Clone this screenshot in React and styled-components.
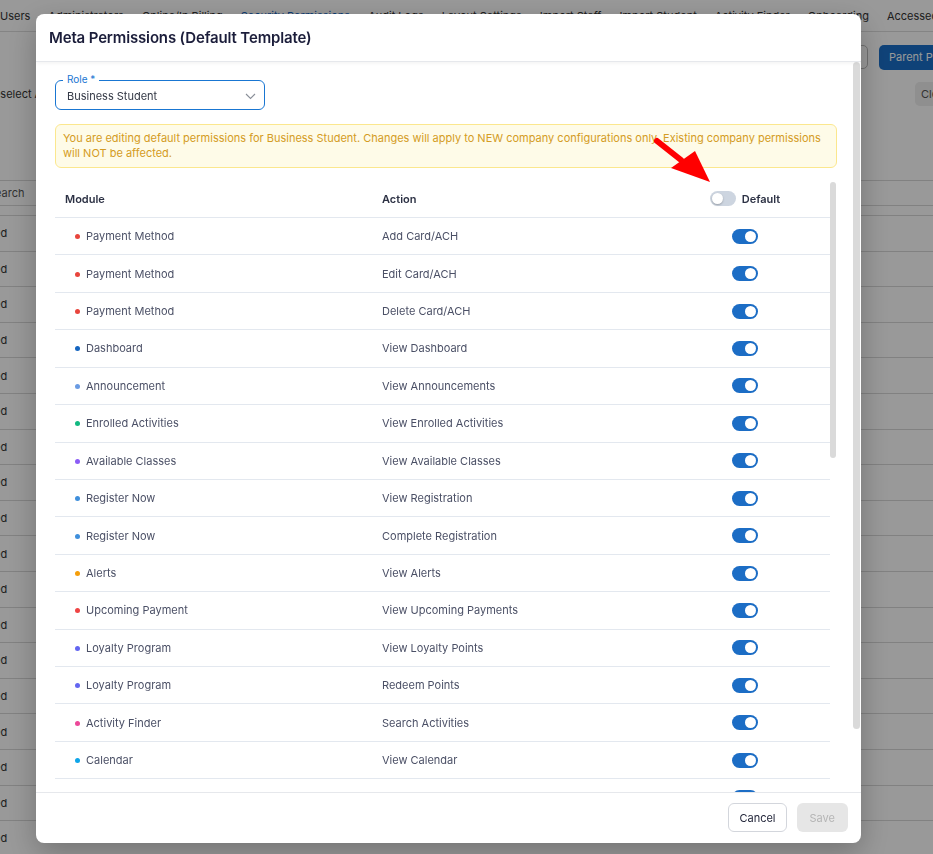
import React from 'react';
import styled, { createGlobalStyle } from 'styled-components';

const GlobalStyle = createGlobalStyle`
	html, body {
		margin: 0;
		padding: 0;
		background: #ffffff;
		font-family: Inter, "Liberation Sans", sans-serif;
		overflow: hidden;
	}
	* {
		box-sizing: border-box;
	}
`;

const tabs = [
	'Users',
	'Administrators',
	'Online/In Billing',
	'Security Permissions',
	'Audit Logs',
	'Layout Settings',
	'Import Staff',
	'Import Student',
	'Activity Finder',
	'Onboarding',
	'Accessed By',
];

const rows = [
	['Payment Method', 'Add Card/ACH', '#e8453c'],
	['Payment Method', 'Edit Card/ACH', '#e8453c'],
	['Payment Method', 'Delete Card/ACH', '#e8453c'],
	['Dashboard', 'View Dashboard', '#1565c0'],
	['Announcement', 'View Announcements', '#6a9be3'],
	['Enrolled Activities', 'View Enrolled Activities', '#12b981'],
	['Available Classes', 'View Available Classes', '#8b5cf6'],
	['Register Now', 'View Registration', '#3f8fdc'],
	['Register Now', 'Complete Registration', '#3f8fdc'],
	['Alerts', 'View Alerts', '#f59e0b'],
	['Upcoming Payment', 'View Upcoming Payments', '#ef4444'],
	['Loyalty Program', 'View Loyalty Points', '#6366f1'],
	['Loyalty Program', 'Redeem Points', '#6366f1'],
	['Activity Finder', 'Search Activities', '#ec4899'],
	['Calendar', 'View Calendar', '#0ea5e9'],
	['Calendar', 'Export Calendar', '#0ea5e9'],
	['Profile', 'View Profile', '#14b8a6'],
	['Profile', 'Edit Profile', '#14b8a6'],
];

// Background page behind the modal
const Page = styled.div`
	width: 100vw;
	height: 100vh;
	background: #ffffff;
	color: #333;
	font-size: 11px;
`;

const TabBar = styled.div`
	display: flex;
	gap: 18px;
	height: 32px;
	align-items: center;
	white-space: nowrap;
	border-bottom: 1px solid #ddd;
	overflow: hidden;
`;

const Tab = styled.span`
	color: ${props => (props.active ? '#1565c0' : '#333')};
	flex: none;
`;

const Toolbar = styled.div`
	display: flex;
	justify-content: flex-end;
	align-items: center;
	gap: 11px;
	height: 48px;
	padding-top: 2px;
	margin-right: -40px;
`;

const OutlineBtn = styled.div`
	width: 60px;
	height: 24px;
	border: 1px solid #bbb;
	border-radius: 5px;
`;

const PrimaryBtn = styled.div`
	width: 94px;
	height: 25px;
	border-radius: 5px;
	background: #1a6fc9;
	color: #fff;
	display: flex;
	align-items: center;
	padding-left: 10px;
	font-size: 11px;
`;

const FilterRow = styled.div`
	display: flex;
	justify-content: space-between;
	align-items: center;
	height: 28px;
	margin-left: -14px;
	margin-right: -30px;
`;

const GhostBtn = styled.div`
	width: 48px;
	height: 24px;
	border-radius: 5px;
	background: #eee;
	color: #555;
	display: flex;
	align-items: center;
	padding-left: 6px;
`;

const BgTable = styled.div`
	margin-top: 72px;
	border-top: 1px solid #d8d8d8;
`;

const BgHead = styled.div`
	height: 25px;
	display: flex;
	align-items: center;
	border-bottom: 1px solid #d8d8d8;
	margin-left: -12px;
	color: #555;
	margin-bottom: 9px;
`;

const BgRow = styled.div`
	height: 35.6px;
	display: flex;
	align-items: center;
	border-top: 1px solid #d8d8d8;
	margin-left: -34px;
`;

// Modal
const Overlay = styled.div`
	position: fixed;
	inset: 0;
	background: rgba(0, 0, 0, 0.4);
`;

const Dialog = styled.div`
	position: fixed;
	left: 36px;
	top: 14px;
	width: 825px;
	height: 829px;
	background: #fff;
	border-radius: 8px;
	box-shadow: 0 10px 30px rgba(0, 0, 0, 0.25);
	display: flex;
	flex-direction: column;
	overflow: hidden;
`;

const Header = styled.div`
	height: 48px;
	flex: none;
	display: flex;
	align-items: center;
	padding-left: 13px;
	border-bottom: 1px solid #e6e8ec;
	box-shadow: 0 1px 4px rgba(0, 0, 0, 0.06);
	position: relative;
	z-index: 1;
`;

const Title = styled.h2`
	margin: 0;
	font-size: 15px;
	font-weight: 600;
	color: #1b1d3a;
	letter-spacing: -0.15px;
`;

const Body = styled.div`
	flex: 1;
	min-height: 0;
	display: flex;
	position: relative;
	overflow: hidden;
`;

const Content = styled.div`
	flex: 1;
	min-width: 0;
	padding: 18px 16px 18px 19px;
`;

const ScrollTrack = styled.div`
	flex: none;
	width: ${props => props.width}px;
	padding-right: ${props => props.gap || 0}px;
`;

const Thumb = styled.div`
	height: ${props => props.size}px;
	background: #dadada;
	border-radius: 4px;
`;

const Field = styled.div`
	position: relative;
	width: 210px;
`;

const SelectBox = styled.div`
	height: 30px;
	border: 1px solid #1976d2;
	border-radius: 6px;
	display: flex;
	align-items: center;
	justify-content: space-between;
	padding: 2px 8px 0 11px;
	font-size: 11px;
	color: #333845;
`;

const FieldLabel = styled.span`
	position: absolute;
	top: -7px;
	left: 8px;
	padding: 0 4px;
	background: #fff;
	color: #1976d2;
	font-size: 10px;
	line-height: 12px;
`;

const Notice = styled.div`
	margin-top: 14px;
	padding: 6px 7px;
	background: #fefbe8;
	border: 1px solid #fbe78e;
	border-radius: 6px;
	color: #d49c24;
	font-size: 11px;
	line-height: 15px;
`;

const TableWrap = styled.div`
	margin-top: 14px;
	height: 661px;
	display: flex;
	overflow: hidden;
`;

const Table = styled.div`
	flex: 1;
	min-width: 0;
`;

const Grid = styled.div`
	display: grid;
	grid-template-columns: 317px 288px 1fr;
	align-items: center;
	height: ${props => (props.head ? '36px' : '37.43px')};
	padding-bottom: ${props => (props.head ? '2px' : '0')};
	border-bottom: 1px solid #e3e8ef;
	font-size: 11px;
	font-weight: ${props => (props.head ? 600 : 400)};
	color: ${props => (props.head ? '#2c3144' : '#4b5066')};
`;

const ModuleCell = styled.div`
	display: flex;
	align-items: center;
	gap: 6px;
	padding-left: ${props => (props.head ? '10px' : '20px')};
`;

const Dot = styled.span`
	width: 5px;
	height: 5px;
	border-radius: 50%;
	background: ${props => props.color};
	flex: none;
	margin-top: 1px;
`;

const ActionCell = styled.div`
	padding-left: 10px;
`;

const ToggleCell = styled.div`
	display: flex;
	justify-content: center;
	align-items: center;
	gap: 6px;
`;

const Track = styled.span`
	width: 26px;
	height: 15px;
	border-radius: 8px;
	background: ${props => (props.on ? '#1c6dc5' : '#cdd5e0')};
	display: flex;
	align-items: center;
	justify-content: ${props => (props.on ? 'flex-end' : 'flex-start')};
	padding: 0 2px;
	&::after {
		content: '';
		width: 11px;
		height: 11px;
		border-radius: 50%;
		background: #fff;
		box-shadow: ${props => (props.on ? 'none' : '0 1px 2px rgba(0,0,0,0.25)')};
	}
`;

const Arrow = styled.svg`
	position: absolute;
	left: 618px;
	top: 64px;
	pointer-events: none;
`;

const Footer = styled.div`
	flex: none;
	height: 51px;
	border-top: 1px solid #e6e8ec;
	display: flex;
	justify-content: flex-end;
	align-items: flex-start;
	gap: 10px;
	padding: 10px 13px 0 0;
`;

const Button = styled.button`
	height: 29px;
	padding: 0 ${props => (props.primary ? '13px' : '10px')};
	border-radius: 6px;
	font-family: inherit;
	font-size: 11px;
	border: ${props => (props.primary ? 'none' : '1px solid #d3d6dc')};
	background: ${props => (props.primary ? '#e6e6e6' : '#fff')};
	color: ${props => (props.primary ? '#b5b5b5' : '#23263a')};
`;

const Chevron = () => (
	<svg width="11" height="7" viewBox="0 0 11 7">
		<path d="M1 1l4.5 4.5L10 1" fill="none" stroke="#8a8f99" strokeWidth="1.1" />
	</svg>
);

export default function App() {
	return (
		<>
			<GlobalStyle />
			<Page>
				<TabBar>
					{tabs.map(t => (
						<Tab key={t} active={t === 'Security Permissions'}>
							{t}
						</Tab>
					))}
				</TabBar>
				<Toolbar>
					<OutlineBtn />
					<PrimaryBtn>Parent Portal</PrimaryBtn>
				</Toolbar>
				<FilterRow>
					<span>Deselect All</span>
					<GhostBtn>Clear</GhostBtn>
				</FilterRow>
				<BgTable>
					<BgHead>Search</BgHead>
					{Array.from({ length: 18 }).map((_, i) => (
						<BgRow key={i}>Allowed</BgRow>
					))}
				</BgTable>
			</Page>
			<Overlay />
			<Dialog>
				<Header>
					<Title>Meta Permissions (Default Template)</Title>
				</Header>
				<Body>
					<Content>
						<Field>
							<FieldLabel>Role *</FieldLabel>
							<SelectBox>
								<span>Business Student</span>
								<Chevron />
							</SelectBox>
						</Field>
						<Notice>
							You are editing default permissions for Business Student. Changes will apply to NEW company
							configurations only. Existing company permissions will NOT be affected.
						</Notice>
						<TableWrap>
							<Table>
								<Grid head>
									<ModuleCell head>Module</ModuleCell>
									<ActionCell>Action</ActionCell>
									<ToggleCell>
										<Track />
										<span>Default</span>
									</ToggleCell>
								</Grid>
								{rows.map(([mod, action, color], i) => (
									<Grid key={i}>
										<ModuleCell>
											<Dot color={color} />
											{mod}
										</ModuleCell>
										<ActionCell>{action}</ActionCell>
										<ToggleCell>
											<Track on />
										</ToggleCell>
									</Grid>
								))}
							</Table>
							<ScrollTrack width={7} gap={1}>
								<Thumb size={276} />
							</ScrollTrack>
						</TableWrap>
					</Content>
					<ScrollTrack width={8} gap={1}>
						<Thumb size={667} />
					</ScrollTrack>
					<Arrow width="60" height="60" viewBox="0 0 60 60">
						<path d="M3 15 L27 34" stroke="#ff0000" strokeWidth="6" strokeLinecap="round" />
						<polygon points="17,42 41,25 56,56" fill="#ff0000" />
					</Arrow>
				</Body>
				<Footer>
					<Button>Cancel</Button>
					<Button primary disabled>
						Save
					</Button>
				</Footer>
			</Dialog>
		</>
	);
}
